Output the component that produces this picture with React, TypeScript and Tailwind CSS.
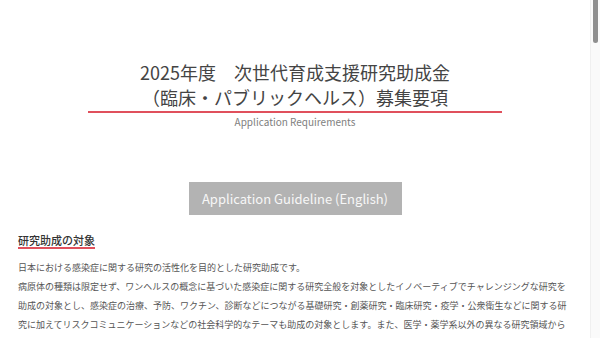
import React from 'react';

const font = { fontFamily: '"Noto Sans CJK JP", "Noto Sans", sans-serif' };

const bodyLines = [
  '日本における感染症に関する研究の活性化を目的とした研究助成です。',
  '病原体の種類は限定せず、ワンヘルスの概念に基づいた感染症に関する研究全般を対象としたイノベーティブでチャレンジングな研究を助成の対象とし、感染症の治療、予防、ワクチン、診断などにつながる基礎研究・創薬研究・臨床研究・疫学・公衆衛生などに関する研究に加えてリスクコミュニケーションなどの社会科学的なテーマも助成の対象とします。また、医学・薬学系以外の異なる研究領域からの応募も歓迎します。',
];

export default function App() {
  return (
    <div className="flex h-screen w-full overflow-hidden bg-white" style={font}>
      <main className="flex-1 min-w-0">
        {/* Title */}
        <div className="pt-[60px] text-center">
          <h1 className="text-[18px] leading-[25px] font-normal text-[#444]">
            2025年度　次世代育成支援研究助成金
            <br />
            （臨床・パブリックヘルス）募集要項
          </h1>
          <div className="mx-auto mt-[1px] h-[2px] w-[414px] bg-[#e0505c]" />
          <p className="mt-[2px] text-[10px] leading-[14px] text-[#808080]">Application Requirements</p>
        </div>

        {/* Guideline button */}
        <div className="mt-[53px] flex justify-center">
          <a className="flex h-[33px] w-[213px] items-center justify-center bg-[#b3b3b3] text-[13px] text-[#f7f7f7]">
            Application Guideline (English)
          </a>
        </div>

        {/* Section */}
        <section className="mt-[18px] px-[18px]">
          <h2 className="block w-fit border-b-2 border-[#e0505c] text-[11px] leading-[14px] font-medium text-[#333]">
            研究助成の対象
          </h2>
          <div className="mt-[9px] text-[9px] leading-[19px] text-[#555]">
            {bodyLines.map((line, i) => (
              <p key={i}>{line}</p>
            ))}
          </div>
        </section>
      </main>

      {/* Scrollbar */}
      <div className="flex w-[10px] shrink-0 justify-center border-l border-[#f0f0f0] bg-[#fafafa]">
        <div className="h-[43px] w-[5px] rounded-b-sm bg-[#8f8f8f]" />
      </div>
    </div>
  );
}
